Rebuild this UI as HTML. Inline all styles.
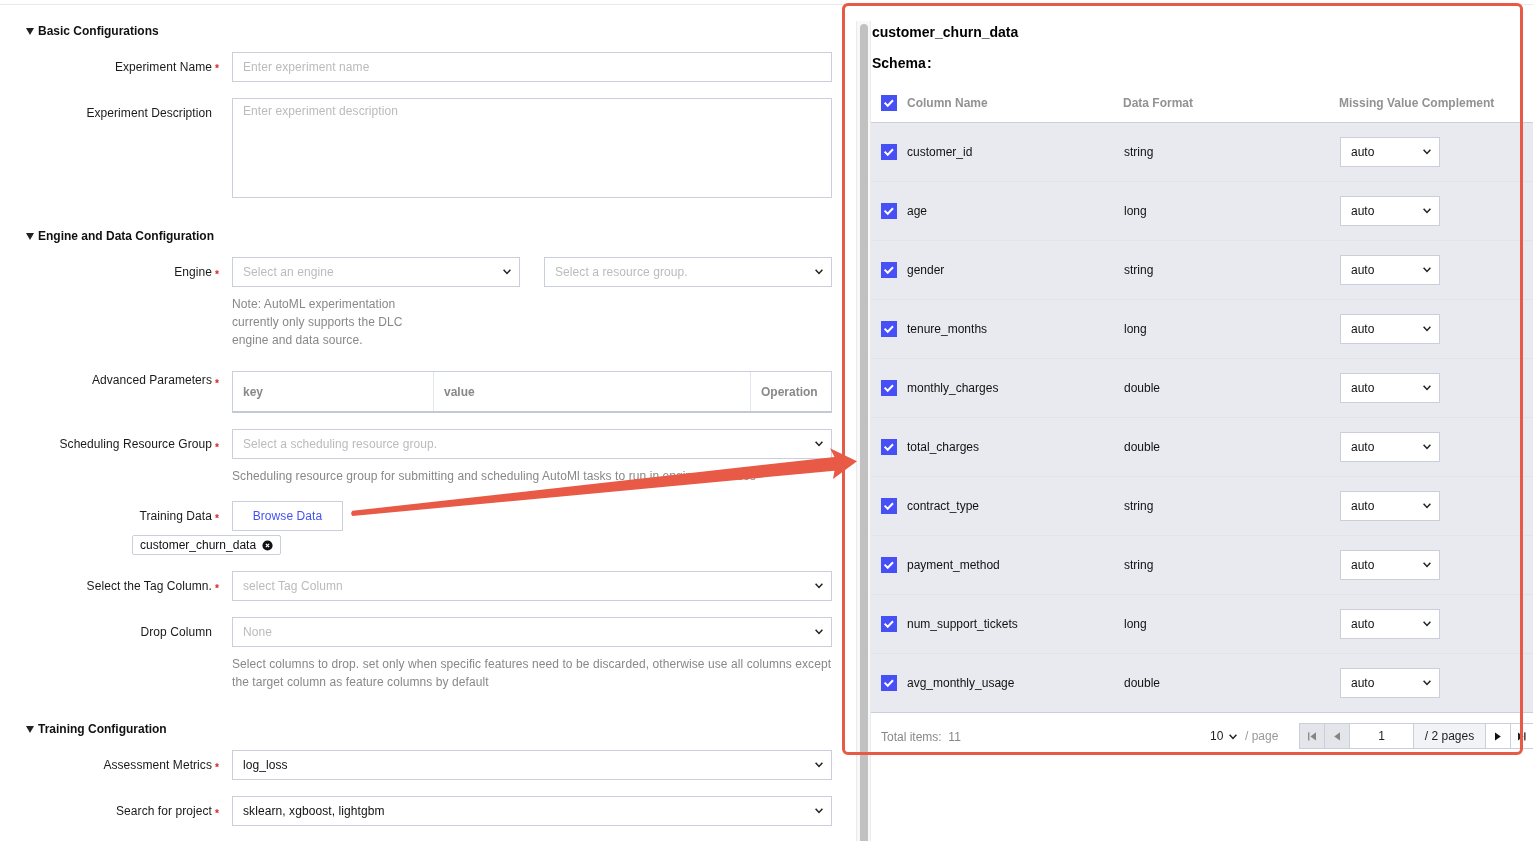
<!DOCTYPE html>
<html><head><meta charset="utf-8">
<style>
*{box-sizing:border-box;margin:0;padding:0}
html,body{width:1533px;height:841px;overflow:hidden;background:#fff}
body{position:relative;will-change:transform;font-family:"Liberation Sans",sans-serif;font-size:12px;color:#333}
.a{position:absolute;white-space:nowrap}
.topline{left:0;top:4px;width:1533px;height:1px;background:#e9e9e9}
.sec{left:38px;height:20px;line-height:20px;font-weight:700;color:#111}
.tri{position:absolute;width:0;height:0;border-left:4px solid transparent;border-right:4px solid transparent;border-top:7px solid #222;left:26px}
.lbl{left:0;width:212px;text-align:right;height:20px;line-height:20px;color:#1a1a1a;letter-spacing:0.07px}
.req{position:absolute;left:215px;width:4px;height:4px}
.inp{position:absolute;left:232px;width:600px;height:30px;border:1px solid #cbcfdc;background:#fff;line-height:28px;padding-left:10px;color:#bbb;white-space:nowrap;letter-spacing:0.08px}
.val{color:#111}
.chev{position:absolute;right:8px;top:11px;width:8px;height:6px}
.help{left:232px;line-height:18px;color:#888;letter-spacing:0.08px}
.row{left:871px;width:662px;height:59px;background:#e9eaf0;border-bottom:1px solid #e1e3e9}
.cb{width:16px;height:16px;display:block}
.hd{line-height:20px;font-weight:700;color:#929292}
.cell{line-height:20px;color:#111}
.sel{width:100px;height:30px;border:1px solid #cbcfdc;background:#fff;line-height:28px;padding-left:10px;color:#111}
.pg{top:724px;height:24px}
</style></head><body>
<div class="a topline"></div>

<!-- LEFT FORM -->
<div class="tri" style="top:28px"></div>
<div class="a sec" style="top:21px">Basic Configurations</div>

<div class="a lbl" style="top:57px">Experiment Name</div>
<svg class="req" style="top:63.5px" viewBox="0 0 4 4"><path d="M2 0 L2.6 1.3 L4 1.4 L3 2.4 L3.3 4 L2 3.2 L0.7 4 L1 2.4 L0 1.4 L1.4 1.3Z" fill="#dd3b3b" stroke="#dd3b3b" stroke-width="0.4"/></svg>
<div class="inp" style="top:52px">Enter experiment name</div>

<div class="a lbl" style="top:103px">Experiment Description</div>
<div class="inp" style="top:98px;height:100px;line-height:18px;padding-top:3px">Enter experiment description</div>

<div class="tri" style="top:233px"></div>
<div class="a sec" style="top:226px">Engine and Data Configuration</div>

<div class="a lbl" style="top:262px">Engine</div>
<svg class="req" style="top:269.5px" viewBox="0 0 4 4"><path d="M2 0 L2.6 1.3 L4 1.4 L3 2.4 L3.3 4 L2 3.2 L0.7 4 L1 2.4 L0 1.4 L1.4 1.3Z" fill="#dd3b3b" stroke="#dd3b3b" stroke-width="0.4"/></svg>
<div class="inp" style="top:257px;width:288px">Select an engine<svg class="chev" viewBox="0 0 8 6"><path d="M0.6 0.8 L4 4.4 L7.4 0.8" fill="none" stroke="#222" stroke-width="1.5"/></svg></div>
<div class="inp" style="top:257px;left:544px;width:288px">Select a resource group.<svg class="chev" viewBox="0 0 8 6"><path d="M0.6 0.8 L4 4.4 L7.4 0.8" fill="none" stroke="#222" stroke-width="1.5"/></svg></div>
<div class="a help" style="top:295px">Note: AutoML experimentation<br>currently only supports the DLC<br>engine and data source.</div>

<div class="a lbl" style="top:370px">Advanced Parameters</div>
<svg class="req" style="top:378.5px" viewBox="0 0 4 4"><path d="M2 0 L2.6 1.3 L4 1.4 L3 2.4 L3.3 4 L2 3.2 L0.7 4 L1 2.4 L0 1.4 L1.4 1.3Z" fill="#dd3b3b" stroke="#dd3b3b" stroke-width="0.4"/></svg>
<div class="a" style="left:232px;top:371px;width:600px;height:42px;border:1px solid #cbcfdc;border-bottom:2px solid #c4c8d6;background:#fff">
  <div class="a" style="left:200px;top:0;width:1px;height:39px;background:#e2e6ee"></div>
  <div class="a" style="left:517px;top:0;width:1px;height:39px;background:#e2e6ee"></div>
  <div class="a" style="left:10px;top:10px;line-height:20px;font-weight:700;color:#888">key</div>
  <div class="a" style="left:211px;top:10px;line-height:20px;font-weight:700;color:#888">value</div>
  <div class="a" style="left:528px;top:10px;line-height:20px;font-weight:700;color:#888">Operation</div>
</div>

<div class="a lbl" style="top:434px">Scheduling Resource Group</div>
<svg class="req" style="top:442.5px" viewBox="0 0 4 4"><path d="M2 0 L2.6 1.3 L4 1.4 L3 2.4 L3.3 4 L2 3.2 L0.7 4 L1 2.4 L0 1.4 L1.4 1.3Z" fill="#dd3b3b" stroke="#dd3b3b" stroke-width="0.4"/></svg>
<div class="inp" style="top:429px">Select a scheduling resource group.<svg class="chev" viewBox="0 0 8 6"><path d="M0.6 0.8 L4 4.4 L7.4 0.8" fill="none" stroke="#222" stroke-width="1.5"/></svg></div>
<div class="a help" style="top:467px">Scheduling resource group for submitting and scheduling AutoMl tasks to run in engine resources</div>

<div class="a lbl" style="top:506px">Training Data</div>
<svg class="req" style="top:513.5px" viewBox="0 0 4 4"><path d="M2 0 L2.6 1.3 L4 1.4 L3 2.4 L3.3 4 L2 3.2 L0.7 4 L1 2.4 L0 1.4 L1.4 1.3Z" fill="#dd3b3b" stroke="#dd3b3b" stroke-width="0.4"/></svg>
<div class="inp" style="top:501px;width:111px;padding:0;text-align:center;color:#4452f5">Browse Data</div>
<div class="a" style="left:132px;top:535px;width:149px;height:20px;border:1px solid #cbcfdc;border-radius:2px;background:#fff;line-height:18px;padding-left:7px;color:#111">customer_churn_data
  <svg class="a" style="left:128.5px;top:3.5px;width:11px;height:11px" viewBox="0 0 11 11"><circle cx="5.5" cy="5.5" r="5.1" fill="#111"/><path d="M3.9 3.9 L7.1 7.1 M7.1 3.9 L3.9 7.1" stroke="#fff" stroke-width="1.3"/></svg>
</div>

<div class="a lbl" style="top:576px">Select the Tag Column.</div>
<svg class="req" style="top:583.5px" viewBox="0 0 4 4"><path d="M2 0 L2.6 1.3 L4 1.4 L3 2.4 L3.3 4 L2 3.2 L0.7 4 L1 2.4 L0 1.4 L1.4 1.3Z" fill="#dd3b3b" stroke="#dd3b3b" stroke-width="0.4"/></svg>
<div class="inp" style="top:571px">select Tag Column<svg class="chev" viewBox="0 0 8 6"><path d="M0.6 0.8 L4 4.4 L7.4 0.8" fill="none" stroke="#222" stroke-width="1.5"/></svg></div>

<div class="a lbl" style="top:622px">Drop Column</div>
<div class="inp" style="top:617px">None<svg class="chev" viewBox="0 0 8 6"><path d="M0.6 0.8 L4 4.4 L7.4 0.8" fill="none" stroke="#222" stroke-width="1.5"/></svg></div>
<div class="a help" style="top:655px">Select columns to drop. set only when specific features need to be discarded, otherwise use all columns except<br>the target column as feature columns by default</div>

<div class="tri" style="top:726px"></div>
<div class="a sec" style="top:719px">Training Configuration</div>

<div class="a lbl" style="top:755px">Assessment Metrics</div>
<svg class="req" style="top:762.5px" viewBox="0 0 4 4"><path d="M2 0 L2.6 1.3 L4 1.4 L3 2.4 L3.3 4 L2 3.2 L0.7 4 L1 2.4 L0 1.4 L1.4 1.3Z" fill="#dd3b3b" stroke="#dd3b3b" stroke-width="0.4"/></svg>
<div class="inp val" style="top:750px">log_loss<svg class="chev" viewBox="0 0 8 6"><path d="M0.6 0.8 L4 4.4 L7.4 0.8" fill="none" stroke="#222" stroke-width="1.5"/></svg></div>

<div class="a lbl" style="top:801px">Search for project</div>
<svg class="req" style="top:808.5px" viewBox="0 0 4 4"><path d="M2 0 L2.6 1.3 L4 1.4 L3 2.4 L3.3 4 L2 3.2 L0.7 4 L1 2.4 L0 1.4 L1.4 1.3Z" fill="#dd3b3b" stroke="#dd3b3b" stroke-width="0.4"/></svg>
<div class="inp val" style="top:796px">sklearn, xgboost, lightgbm<svg class="chev" viewBox="0 0 8 6"><path d="M0.6 0.8 L4 4.4 L7.4 0.8" fill="none" stroke="#222" stroke-width="1.5"/></svg></div>

<!-- RIGHT PANEL -->
<div id="rp">
<div class="a" style="left:856px;top:21px;width:15px;height:820px;background:#f8f8f8;border-left:1px solid #ebebeb;border-right:1px solid #ebebeb"></div>
<div class="a" style="left:860px;top:24px;width:8px;height:830px;background:#c1c1c1;border-radius:4px"></div>
<div class="a" style="left:872px;top:22px;line-height:20px;font-size:14px;font-weight:700;color:#000">customer_churn_data</div>
<div class="a" style="left:872px;top:53px;line-height:20px;font-size:14px;font-weight:700;color:#000">Schema</div><div class="a" style="left:927px;top:53px;line-height:20px;font-size:14px;font-weight:700;color:#000">:</div>
<div class="a" style="left:871px;top:80px;width:662px;height:43px;background:#fff;border-bottom:1px solid #cbcfdc"></div>
<div class="a" style="left:881px;top:95px;width:16px;height:16px"><svg class="cb" viewBox="0 0 16 16"><rect width="16" height="16" fill="#4750f5"/><path d="M3.6 7.6 L6.7 10.7 L12 5.2" fill="none" stroke="#fff" stroke-width="2"/></svg></div>
<div class="a hd" style="left:907px;top:93px">Column Name</div>
<div class="a hd" style="left:1123px;top:93px">Data Format</div>
<div class="a hd" style="left:1339px;top:93px">Missing Value Complement</div>
<div class="a row" style="top:123px;border-bottom-color:#e1e3e9"><div class="a" style="left:10px;top:21px;width:16px;height:16px"><svg class="cb" viewBox="0 0 16 16"><rect width="16" height="16" fill="#4750f5"/><path d="M3.6 7.6 L6.7 10.7 L12 5.2" fill="none" stroke="#fff" stroke-width="2"/></svg></div><div class="a cell" style="left:36px;top:19px">customer_id</div><div class="a cell" style="left:253px;top:19px">string</div><div class="a sel" style="left:469px;top:14px">auto<svg class="chev" viewBox="0 0 8 6"><path d="M0.6 0.8 L4 4.4 L7.4 0.8" fill="none" stroke="#222" stroke-width="1.5"/></svg></div></div>
<div class="a row" style="top:182px;border-bottom-color:#e1e3e9"><div class="a" style="left:10px;top:21px;width:16px;height:16px"><svg class="cb" viewBox="0 0 16 16"><rect width="16" height="16" fill="#4750f5"/><path d="M3.6 7.6 L6.7 10.7 L12 5.2" fill="none" stroke="#fff" stroke-width="2"/></svg></div><div class="a cell" style="left:36px;top:19px">age</div><div class="a cell" style="left:253px;top:19px">long</div><div class="a sel" style="left:469px;top:14px">auto<svg class="chev" viewBox="0 0 8 6"><path d="M0.6 0.8 L4 4.4 L7.4 0.8" fill="none" stroke="#222" stroke-width="1.5"/></svg></div></div>
<div class="a row" style="top:241px;border-bottom-color:#e1e3e9"><div class="a" style="left:10px;top:21px;width:16px;height:16px"><svg class="cb" viewBox="0 0 16 16"><rect width="16" height="16" fill="#4750f5"/><path d="M3.6 7.6 L6.7 10.7 L12 5.2" fill="none" stroke="#fff" stroke-width="2"/></svg></div><div class="a cell" style="left:36px;top:19px">gender</div><div class="a cell" style="left:253px;top:19px">string</div><div class="a sel" style="left:469px;top:14px">auto<svg class="chev" viewBox="0 0 8 6"><path d="M0.6 0.8 L4 4.4 L7.4 0.8" fill="none" stroke="#222" stroke-width="1.5"/></svg></div></div>
<div class="a row" style="top:300px;border-bottom-color:#e1e3e9"><div class="a" style="left:10px;top:21px;width:16px;height:16px"><svg class="cb" viewBox="0 0 16 16"><rect width="16" height="16" fill="#4750f5"/><path d="M3.6 7.6 L6.7 10.7 L12 5.2" fill="none" stroke="#fff" stroke-width="2"/></svg></div><div class="a cell" style="left:36px;top:19px">tenure_months</div><div class="a cell" style="left:253px;top:19px">long</div><div class="a sel" style="left:469px;top:14px">auto<svg class="chev" viewBox="0 0 8 6"><path d="M0.6 0.8 L4 4.4 L7.4 0.8" fill="none" stroke="#222" stroke-width="1.5"/></svg></div></div>
<div class="a row" style="top:359px;border-bottom-color:#e1e3e9"><div class="a" style="left:10px;top:21px;width:16px;height:16px"><svg class="cb" viewBox="0 0 16 16"><rect width="16" height="16" fill="#4750f5"/><path d="M3.6 7.6 L6.7 10.7 L12 5.2" fill="none" stroke="#fff" stroke-width="2"/></svg></div><div class="a cell" style="left:36px;top:19px">monthly_charges</div><div class="a cell" style="left:253px;top:19px">double</div><div class="a sel" style="left:469px;top:14px">auto<svg class="chev" viewBox="0 0 8 6"><path d="M0.6 0.8 L4 4.4 L7.4 0.8" fill="none" stroke="#222" stroke-width="1.5"/></svg></div></div>
<div class="a row" style="top:418px;border-bottom-color:#e1e3e9"><div class="a" style="left:10px;top:21px;width:16px;height:16px"><svg class="cb" viewBox="0 0 16 16"><rect width="16" height="16" fill="#4750f5"/><path d="M3.6 7.6 L6.7 10.7 L12 5.2" fill="none" stroke="#fff" stroke-width="2"/></svg></div><div class="a cell" style="left:36px;top:19px">total_charges</div><div class="a cell" style="left:253px;top:19px">double</div><div class="a sel" style="left:469px;top:14px">auto<svg class="chev" viewBox="0 0 8 6"><path d="M0.6 0.8 L4 4.4 L7.4 0.8" fill="none" stroke="#222" stroke-width="1.5"/></svg></div></div>
<div class="a row" style="top:477px;border-bottom-color:#e1e3e9"><div class="a" style="left:10px;top:21px;width:16px;height:16px"><svg class="cb" viewBox="0 0 16 16"><rect width="16" height="16" fill="#4750f5"/><path d="M3.6 7.6 L6.7 10.7 L12 5.2" fill="none" stroke="#fff" stroke-width="2"/></svg></div><div class="a cell" style="left:36px;top:19px">contract_type</div><div class="a cell" style="left:253px;top:19px">string</div><div class="a sel" style="left:469px;top:14px">auto<svg class="chev" viewBox="0 0 8 6"><path d="M0.6 0.8 L4 4.4 L7.4 0.8" fill="none" stroke="#222" stroke-width="1.5"/></svg></div></div>
<div class="a row" style="top:536px;border-bottom-color:#e1e3e9"><div class="a" style="left:10px;top:21px;width:16px;height:16px"><svg class="cb" viewBox="0 0 16 16"><rect width="16" height="16" fill="#4750f5"/><path d="M3.6 7.6 L6.7 10.7 L12 5.2" fill="none" stroke="#fff" stroke-width="2"/></svg></div><div class="a cell" style="left:36px;top:19px">payment_method</div><div class="a cell" style="left:253px;top:19px">string</div><div class="a sel" style="left:469px;top:14px">auto<svg class="chev" viewBox="0 0 8 6"><path d="M0.6 0.8 L4 4.4 L7.4 0.8" fill="none" stroke="#222" stroke-width="1.5"/></svg></div></div>
<div class="a row" style="top:595px;border-bottom-color:#e1e3e9"><div class="a" style="left:10px;top:21px;width:16px;height:16px"><svg class="cb" viewBox="0 0 16 16"><rect width="16" height="16" fill="#4750f5"/><path d="M3.6 7.6 L6.7 10.7 L12 5.2" fill="none" stroke="#fff" stroke-width="2"/></svg></div><div class="a cell" style="left:36px;top:19px">num_support_tickets</div><div class="a cell" style="left:253px;top:19px">long</div><div class="a sel" style="left:469px;top:14px">auto<svg class="chev" viewBox="0 0 8 6"><path d="M0.6 0.8 L4 4.4 L7.4 0.8" fill="none" stroke="#222" stroke-width="1.5"/></svg></div></div>
<div class="a row" style="top:654px;border-bottom-color:#cbcfdc"><div class="a" style="left:10px;top:21px;width:16px;height:16px"><svg class="cb" viewBox="0 0 16 16"><rect width="16" height="16" fill="#4750f5"/><path d="M3.6 7.6 L6.7 10.7 L12 5.2" fill="none" stroke="#fff" stroke-width="2"/></svg></div><div class="a cell" style="left:36px;top:19px">avg_monthly_usage</div><div class="a cell" style="left:253px;top:19px">double</div><div class="a sel" style="left:469px;top:14px">auto<svg class="chev" viewBox="0 0 8 6"><path d="M0.6 0.8 L4 4.4 L7.4 0.8" fill="none" stroke="#222" stroke-width="1.5"/></svg></div></div>

<div class="a" style="left:881px;top:727px;line-height:20px;color:#888">Total items:&nbsp; 11</div>
<div class="a" style="left:1210px;top:726px;line-height:20px;color:#222">10</div>
<svg class="a" style="left:1229px;top:734px;width:8px;height:6px" viewBox="0 0 8 6"><path d="M0.6 0.8 L4 4.4 L7.4 0.8" fill="none" stroke="#222" stroke-width="1.5"/></svg>
<div class="a" style="left:1245px;top:726px;line-height:20px;color:#999">/ page</div>
<div class="a" style="left:1299px;top:723px;width:240px;height:26px;border:1px solid #cbcfdc;background:#fff"></div>
<div class="a pg" style="left:1300px;width:24px;background:#e4e5eb"><svg style="position:absolute;left:7px;top:7.5px" width="10" height="9" viewBox="0 0 10 9"><rect x="1.1" y="0.3" width="1.3" height="8.2" fill="#858585"/><path d="M9 0.3 L3.4 4.4 L9 8.5Z" fill="#858585"/></svg></div>
<div class="a pg" style="left:1325px;width:24px;background:#e4e5eb"><svg style="position:absolute;left:8px;top:7.5px" width="8" height="9" viewBox="0 0 8 9"><path d="M7 0.3 L1.2 4.4 L7 8.5Z" fill="#858585"/></svg></div>
<div class="a pg" style="left:1350px;width:63px;background:#fff;text-align:center;color:#222;line-height:24px">1</div>
<div class="a pg" style="left:1414px;width:71px;background:#f2f3f6;text-align:center;color:#222;line-height:24px">/ 2 pages</div>
<div class="a pg" style="left:1486px;width:24px;background:#fff"><svg style="position:absolute;left:8px;top:7.5px" width="8" height="9" viewBox="0 0 8 9"><path d="M1 0.4 L6.8 4.4 L1 8.4Z" fill="#111"/></svg></div>
<div class="a pg" style="left:1511px;width:24px;background:#fff"><svg style="position:absolute;left:6px;top:7.5px" width="10" height="9" viewBox="0 0 10 9"><path d="M1 0.4 L6.6 4.4 L1 8.4Z" fill="#222"/><rect x="7.2" y="0.4" width="1.3" height="8" fill="#222"/></svg></div>
<div class="a" style="left:1324px;top:724px;width:1px;height:24px;background:#cbcfdc"></div>
<div class="a" style="left:1349px;top:724px;width:1px;height:24px;background:#cbcfdc"></div>
<div class="a" style="left:1413px;top:724px;width:1px;height:24px;background:#cbcfdc"></div>
<div class="a" style="left:1485px;top:724px;width:1px;height:24px;background:#cbcfdc"></div>
<div class="a" style="left:1510px;top:724px;width:1px;height:24px;background:#cbcfdc"></div>

</div>

<div class="a" style="left:842px;top:3px;width:681px;height:752px;border:3px solid #e85a45;border-radius:6px"></div>
<svg class="a" style="left:0;top:0" width="1533" height="841" viewBox="0 0 1533 841"><path d="M352.5 510.8 L834.5 457 L830 448.3 L857 461.2 L833 479.1 L834.5 470.8 L352.5 516 Q349.8 513.4 352.5 510.8Z" fill="#e85a45"/></svg>

</body></html>
